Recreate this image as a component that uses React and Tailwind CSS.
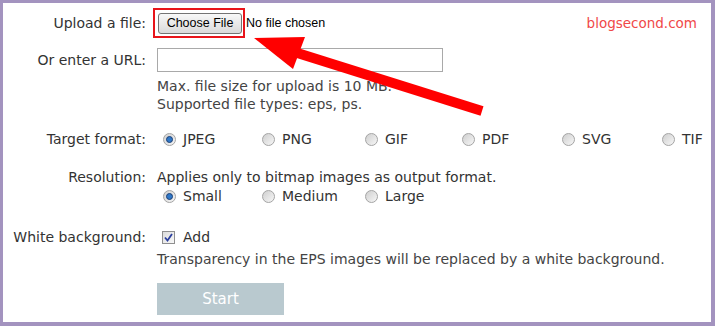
import React from "react";

const font = "font-['DejaVu_Sans',Verdana,sans-serif]";

const Radio = ({ checked }) => (
  <span className="relative flex h-[13px] w-[13px] items-center justify-center rounded-full border border-[#a4a4a4] bg-gradient-to-br from-[#cfcfcf] to-[#f7f7f7]">
    {checked && (
      <span className="h-[7px] w-[7px] rounded-full border border-[#1d3f74] bg-[#2f78c8]" />
    )}
  </span>
);

const Options = ({ items, selected }) => {
  const widths = ["w-[99px]", "w-[103px]", "w-[97px]", "w-[100px]", "w-[100px]", "w-[50px]"];
  return (
    <div className="flex h-[20px] items-center">
      {items.map((item, i) => (
        <label key={item} className={`${widths[i]} flex shrink-0 items-center pl-[6px]`}>
          <Radio checked={item === selected} />
          <span className="ml-[7px]">{item}</span>
        </label>
      ))}
    </div>
  );
};

const Row = ({ label, children, className = "" }) => (
  <div className={`flex ${className}`}>
    <div className="w-[143px] shrink-0 whitespace-nowrap text-right">{label}</div>
    <div className="ml-[11px]">{children}</div>
  </div>
);

export default function App() {
  return (
    <div
      className={`relative h-[326px] w-[715px] overflow-hidden border-t-[3px] border-l-[3px] border-r-[4px] border-b-[4px] border-[#a393bf] bg-white text-[14px] leading-[18px] text-[#333] ${font}`}
    >
      <div className="absolute right-[14px] top-[11px] text-[13.5px] text-[#f04848]">blogsecond.com</div>

      <Row label="Upload a file:" className="mt-[5px] h-[30px] items-center">
        <div className="-ml-[4px] flex items-center">
          <div className="flex h-[30px] w-[92px] items-center border-2 border-[#e8141a] pl-[3px]">
            <button className="h-[21px] w-[84px] rounded-[3px] border border-[#747474] bg-gradient-to-b from-[#f8f8f8] to-[#dadada] font-['Liberation_Sans',Arial,sans-serif] text-[12.5px] leading-none text-black">
              Choose File
            </button>
          </div>
          <span className="ml-[1px] font-['Liberation_Sans',Arial,sans-serif] text-[12.5px] text-black">No file chosen</span>
        </div>
      </Row>

      <Row label="Or enter a URL:" className="mt-[10px] h-[24px] items-center">
        <div className="h-[24px] w-[286px] border border-[#a9a9a9] bg-white" />
      </Row>

      <Row label="" className="mt-[5px]">
        <div className="text-[#444]">Max. file size for upload is 10 MB.</div>
        <div className="text-[#444]">Supported file types: eps, ps.</div>
      </Row>

      <Row label="Target format:" className="mt-[16px] h-[20px] items-center">
        <Options items={["JPEG", "PNG", "GIF", "PDF", "SVG", "TIF"]} selected="JPEG" />
      </Row>

      <Row label="Resolution:" className="mt-[19px]">
        <div>Applies only to bitmap images as output format.</div>
        <Options items={["Small", "Medium", "Large"]} selected="Small" />
      </Row>

      <Row label="White background:" className="mt-[22px] h-[18px] items-center">
        <label className="flex items-center pl-[5px]">
          <span className="flex h-[13px] w-[13px] items-center justify-center border border-[#8f8f8f] bg-gradient-to-br from-[#dcdcdc] to-[#f8f8f8]">
            <svg width="9" height="9" viewBox="0 0 9 9">
              <path d="M1 4.5 L3.5 7.5 L8 1" fill="none" stroke="#2b3f9e" strokeWidth="1.8" />
            </svg>
          </span>
          <span className="ml-[8px]">Add</span>
        </label>
      </Row>

      <Row label="" className="mt-[4px]">
        <div className="whitespace-nowrap text-[#444]">Transparency in the EPS images will be replaced by a white background.</div>
      </Row>

      <Row label="" className="mt-[15px]">
        <button className="h-[32px] w-[127px] bg-[#b9c9cf] text-[15px] text-white">Start</button>
      </Row>

      <svg className="pointer-events-none absolute -left-[3px] -top-[3px]" width="715" height="326">
        <polygon points="254,38 305,37 293,69" fill="#ff0000" />
        <line x1="291" y1="51" x2="482" y2="111" stroke="#ff0000" strokeWidth="10" />
      </svg>
    </div>
  );
}
